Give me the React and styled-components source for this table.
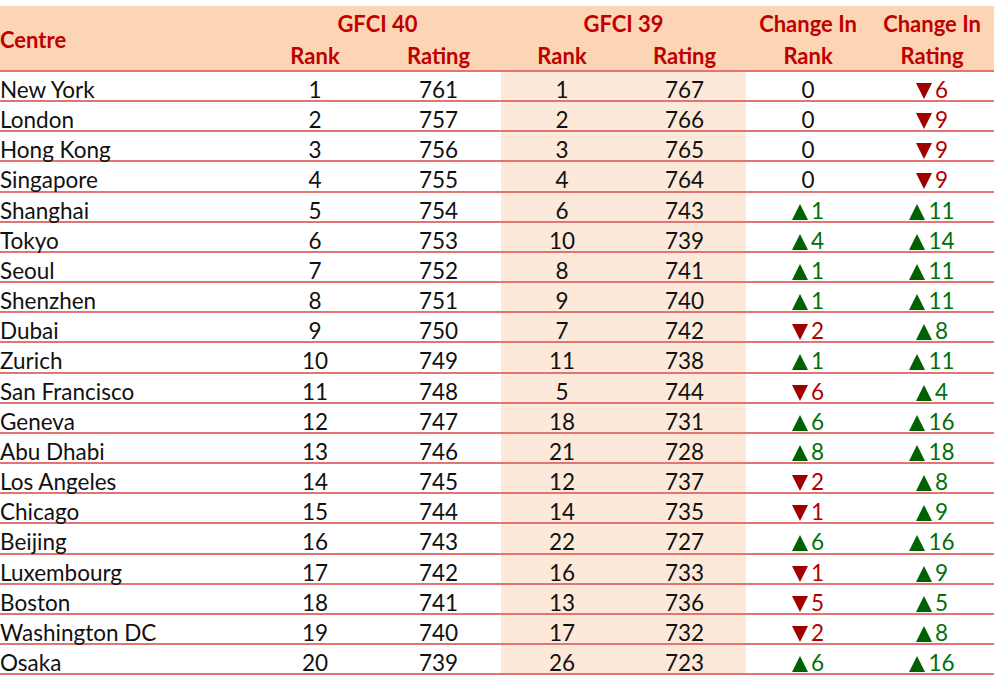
import React from 'react';
import styled, { createGlobalStyle } from 'styled-components';

const GlobalStyle = createGlobalStyle`
  html, body {
    margin: 0;
    padding: 0;
    background: #ffffff;
  }
`;

const rows = [
  ['New York', 1, 761, 1, 767, 0, -6],
  ['London', 2, 757, 2, 766, 0, -9],
  ['Hong Kong', 3, 756, 3, 765, 0, -9],
  ['Singapore', 4, 755, 4, 764, 0, -9],
  ['Shanghai', 5, 754, 6, 743, 1, 11],
  ['Tokyo', 6, 753, 10, 739, 4, 14],
  ['Seoul', 7, 752, 8, 741, 1, 11],
  ['Shenzhen', 8, 751, 9, 740, 1, 11],
  ['Dubai', 9, 750, 7, 742, -2, 8],
  ['Zurich', 10, 749, 11, 738, 1, 11],
  ['San Francisco', 11, 748, 5, 744, -6, 4],
  ['Geneva', 12, 747, 18, 731, 6, 16],
  ['Abu Dhabi', 13, 746, 21, 728, 8, 18],
  ['Los Angeles', 14, 745, 12, 737, -2, 8],
  ['Chicago', 15, 744, 14, 735, -1, 9],
  ['Beijing', 16, 743, 22, 727, 6, 16],
  ['Luxembourg', 17, 742, 16, 733, -1, 9],
  ['Boston', 18, 741, 13, 736, -5, 5],
  ['Washington DC', 19, 740, 17, 732, -2, 8],
  ['Osaka', 20, 739, 26, 723, 6, 16],
];

const Page = styled.div`
  padding-top: 6px;
  width: 994px;
  font-family: Lato, 'Open Sans', sans-serif;
`;

const Table = styled.table`
  border-collapse: collapse;
  table-layout: fixed;
  width: 994px;
`;

const HeadRow = styled.tr`
  background: #fcd5b5;
`;

const Th = styled.th`
  color: #c00000;
  font-weight: 700;
  font-size: 22px;
  line-height: 29px;
  padding: 3px 0 0 0;
  text-align: ${(p) => (p.$left ? 'left' : 'center')};
  border-bottom: ${(p) => (p.$last ? '2px solid #e27474' : 'none')};
  white-space: nowrap;
  overflow: hidden;
`;

const Tr = styled.tr`
  border-bottom: 2px solid #e27474;
`;

const Td = styled.td`
  padding: 8px 0 0 0;
  font-size: 22.5px;
  line-height: 20.15px;
  color: #111111;
  text-align: ${(p) => (p.$left ? 'left' : 'center')};
  background: ${(p) => (p.$shade ? '#fde9d9' : 'transparent')};
  white-space: nowrap;
`;

const Change = styled.span`
  color: ${(p) => (p.$up ? '#00700a' : '#b00000')};
`;

const Arrow = styled.span`
  display: inline-block;
  width: 0;
  height: 0;
  margin-right: 3px;
  border-left: 8px solid transparent;
  border-right: 8px solid transparent;
  border-top: ${(p) => (p.$up ? 'none' : '16px solid #a00000')};
  border-bottom: ${(p) => (p.$up ? '16px solid #006100' : 'none')};
  vertical-align: -1px;
`;

const Delta = ({ value }) => {
  if (value === 0) return <span>0</span>;
  const up = value > 0;
  return (
    <Change $up={up}>
      <Arrow $up={up} />
      {Math.abs(value)}
    </Change>
  );
};

export default function App() {
  return (
    <Page>
      <GlobalStyle />
      <Table>
        <colgroup>
          <col style={{ width: 254 }} />
          <col style={{ width: 122 }} />
          <col style={{ width: 125 }} />
          <col style={{ width: 122 }} />
          <col style={{ width: 123 }} />
          <col style={{ width: 124 }} />
          <col style={{ width: 124 }} />
        </colgroup>
        <thead>
          <HeadRow>
            <Th $left $last rowSpan={2}>Centre</Th>
            <Th colSpan={2}>GFCI 40</Th>
            <Th colSpan={2}>GFCI 39</Th>
            <Th>Change In</Th>
            <Th>Change In</Th>
          </HeadRow>
          <HeadRow>
            <Th $last>Rank</Th>
            <Th $last>Rating</Th>
            <Th $last>Rank</Th>
            <Th $last>Rating</Th>
            <Th $last>Rank</Th>
            <Th $last>Rating</Th>
          </HeadRow>
        </thead>
        <tbody>
          {rows.map(([name, r40, s40, r39, s39, dr, ds]) => (
            <Tr key={name}>
              <Td $left>{name}</Td>
              <Td>{r40}</Td>
              <Td>{s40}</Td>
              <Td $shade>{r39}</Td>
              <Td $shade>{s39}</Td>
              <Td><Delta value={dr} /></Td>
              <Td><Delta value={ds} /></Td>
            </Tr>
          ))}
        </tbody>
      </Table>
    </Page>
  );
}
